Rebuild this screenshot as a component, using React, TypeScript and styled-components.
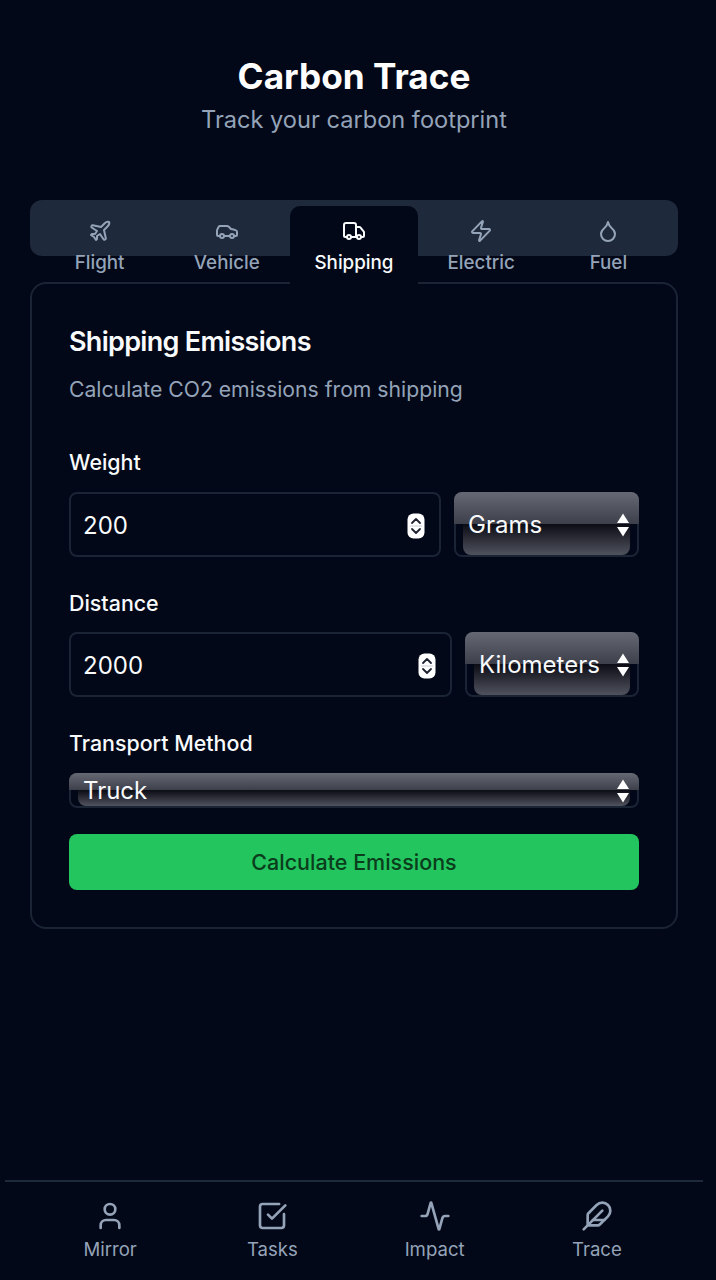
import React from 'react';
import styled, { createGlobalStyle } from 'styled-components';
import { Activity, Car, Droplet, Feather, Plane, SquareCheckBig, Truck, User, Zap } from 'lucide-react';

const GlobalStyle = createGlobalStyle`
  html, body {
    margin: 0;
    padding: 0;
    background: #020817;
  }
  * {
    box-sizing: border-box;
  }
`;

const tabs = [
  { label: 'Flight', icon: Plane },
  { label: 'Vehicle', icon: Car },
  { label: 'Shipping', icon: Truck, active: true },
  { label: 'Electric', icon: Zap },
  { label: 'Fuel', icon: Droplet },
];

const navItems = [
  { label: 'Mirror', icon: User },
  { label: 'Tasks', icon: SquareCheckBig },
  { label: 'Impact', icon: Activity },
  { label: 'Trace', icon: Feather },
];

const Stepper = () => (
  <StepperIcon width="18" height="26" viewBox="0 0 18 26">
    <rect x="0.5" y="0.5" width="17" height="25" rx="6" fill="#fff" />
    <path d="M5 10l4-4 4 4" fill="none" stroke="#1e2230" strokeWidth="1.8" strokeLinecap="round" strokeLinejoin="round" />
    <path d="M5 16l4 4 4-4" fill="none" stroke="#1e2230" strokeWidth="1.8" strokeLinecap="round" strokeLinejoin="round" />
    <rect x="3" y="12.5" width="12" height="1" fill="#c9ccd3" />
  </StepperIcon>
);

const SelectArrows = () => (
  <svg width="12" height="24" viewBox="0 0 12 24">
    <path d="M6 0.5L12 10H0z" fill="#fff" />
    <path d="M6 23.5L0 14h12z" fill="#fff" />
  </svg>
);

export default function App() {
  return (
    <Page>
      <GlobalStyle />
      <Main>
        <Header>
          <Title>Carbon Trace</Title>
          <Subtitle>Track your carbon footprint</Subtitle>
        </Header>

        <TabBar>
          {tabs.map(({ label, icon: Icon, active }) => (
            <Tab key={label} $active={!!active}>
              <Icon size={24} strokeWidth={2} />
              <span>{label}</span>
            </Tab>
          ))}
        </TabBar>

        <Card>
          <CardTitle>Shipping Emissions</CardTitle>
          <CardText>Calculate CO2 emissions from shipping</CardText>

          <Label>Weight</Label>
          <FieldRow>
            <NumberBox>
              <NumberValue>200</NumberValue>
              <Stepper />
            </NumberBox>
            <FakeSelect $width={185}>
              <SelectText>Grams</SelectText>
              <SelectArrows />
            </FakeSelect>
          </FieldRow>

          <Label>Distance</Label>
          <FieldRow>
            <NumberBox>
              <NumberValue>2000</NumberValue>
              <Stepper />
            </NumberBox>
            <FakeSelect $width={174}>
              <SelectText>Kilometers</SelectText>
              <SelectArrows />
            </FakeSelect>
          </FieldRow>

          <Label $after={16}>Transport Method</Label>
          <FieldRow>
            <FakeSelect $slim>
              <SelectText>Truck</SelectText>
              <SelectArrows />
            </FakeSelect>
          </FieldRow>

          <CalcButton>Calculate Emissions</CalcButton>
        </Card>
      </Main>

      <BottomNav>
        {navItems.map(({ label, icon: Icon }) => (
          <NavItem key={label}>
            <Icon size={32} strokeWidth={2} />
            <span>{label}</span>
          </NavItem>
        ))}
      </BottomNav>
    </Page>
  );
}

const Page = styled.div`
  height: 1280px;
  display: flex;
  flex-direction: column;
  justify-content: space-between;
  background: #020817;
  font-family: Inter, 'Liberation Sans', sans-serif;
  color: #f8fafc;
  overflow: hidden;
`;

const Main = styled.main`
  padding: 56px 38px 0 30px;
`;

const Header = styled.header`
  text-align: center;
  margin-bottom: 64px;
`;

const Title = styled.h1`
  margin: 0;
  font-size: 35.2px;
  line-height: 40px;
  font-weight: 700;
  color: #fff;
`;

const Subtitle = styled.p`
  margin: 8px 0 0;
  font-size: 23.6px;
  line-height: 32px;
  font-weight: 400;
  color: #94a3b8;
`;

const TabBar = styled.div`
  display: grid;
  grid-template-columns: repeat(5, 1fr);
  height: 56px;
  padding: 6px 6px 0;
  border-radius: 12px;
  background: #1e293b;
`;

const Tab = styled.div<{ $active: boolean }>`
  position: relative;
  z-index: 1;
  height: 78px;
  padding-top: 13px;
  display: flex;
  flex-direction: column;
  align-items: center;
  gap: 8px;
  border-radius: 10px 10px 0 0;
  font-size: 18.8px;
  line-height: 24px;
  font-weight: 500;
  background: ${({ $active }) => ($active ? '#020817' : 'transparent')};
  color: ${({ $active }) => ($active ? '#f8fafc' : '#94a3b8')};
`;

const Card = styled.section`
  margin-top: 26px;
  height: 647px;
  padding: 40px 37px 0;
  border: 2px solid #1a2435;
  border-radius: 16px;
`;

const CardTitle = styled.h2`
  margin: 0;
  font-size: 27px;
  line-height: 36px;
  font-weight: 600;
  letter-spacing: -0.7px;
  color: #f8fafc;
`;

const CardText = styled.p`
  margin: 15px 0 0;
  font-size: 21.2px;
  line-height: 28px;
  color: #94a3b8;
`;

const Label = styled.div<{ $after?: number }>`
  margin-top: 32px;
  margin-bottom: ${({ $after }) => $after ?? 15}px;
  font-size: 21.4px;
  line-height: 28px;
  font-weight: 500;
  color: #f8fafc;

  ${CardText} + & {
    margin-top: 45px;
    margin-bottom: 16px;
  }
`;

const FieldRow = styled.div`
  display: flex;
  gap: 13px;
`;

const NumberBox = styled.div`
  flex: 1;
  height: 65px;
  display: flex;
  align-items: center;
  justify-content: space-between;
  padding: 0 14px 0 12px;
  border: 2px solid #1a2435;
  border-radius: 8px;
`;

const NumberValue = styled.span`
  padding-top: 1px;
  font-size: 24px;
  color: #f8fafc;
`;

const StepperIcon = styled.svg`
  flex: none;
  margin-top: 3px;
`;

const FakeSelect = styled.div<{ $width?: number; $slim?: boolean }>`
  position: relative;
  flex: ${({ $width }) => ($width ? `0 0 ${$width}px` : '1')};
  height: ${({ $slim }) => ($slim ? '35px' : '65px')};
  display: flex;
  align-items: center;
  justify-content: space-between;
  padding: 0 8px 0 12px;
  border: 2px solid #1a2435;
  border-radius: 8px;
  background: #020817;

  &::before {
    content: '';
    position: absolute;
    left: -2px;
    right: -2px;
    top: -2px;
    height: calc(50% + 1px);
    border-radius: 8px 8px 0 0;
    background: linear-gradient(#666874, #3d3f4a);
  }

  &::after {
    content: '';
    position: absolute;
    left: 7px;
    right: 7px;
    top: calc(50% - 1px);
    bottom: 0;
    border-radius: 0 0 8px 8px;
    background: linear-gradient(#0b0c14, #50525e);
  }

  > * {
    position: relative;
    z-index: 1;
  }
`;

const SelectText = styled.span`
  font-size: 24px;
  color: #f8fafc;
`;

const CalcButton = styled.button`
  display: block;
  width: 100%;
  height: 56px;
  margin-top: 26px;
  border: none;
  border-radius: 8px;
  background: #22c55e;
  font-family: inherit;
  font-size: 21.5px;
  font-weight: 500;
  color: #0b3d1c;
`;

const BottomNav = styled.nav`
  margin: 0 13px 0 5px;
  height: 100px;
  padding: 0 25px 0 24px;
  display: grid;
  grid-template-columns: repeat(4, 1fr);
  border-top: 2px solid #1e293b;
`;

const NavItem = styled.div`
  padding-top: 18px;
  display: flex;
  flex-direction: column;
  align-items: center;
  gap: 3px;
  font-size: 18.6px;
  line-height: 28px;
  color: #94a3b8;
`;
